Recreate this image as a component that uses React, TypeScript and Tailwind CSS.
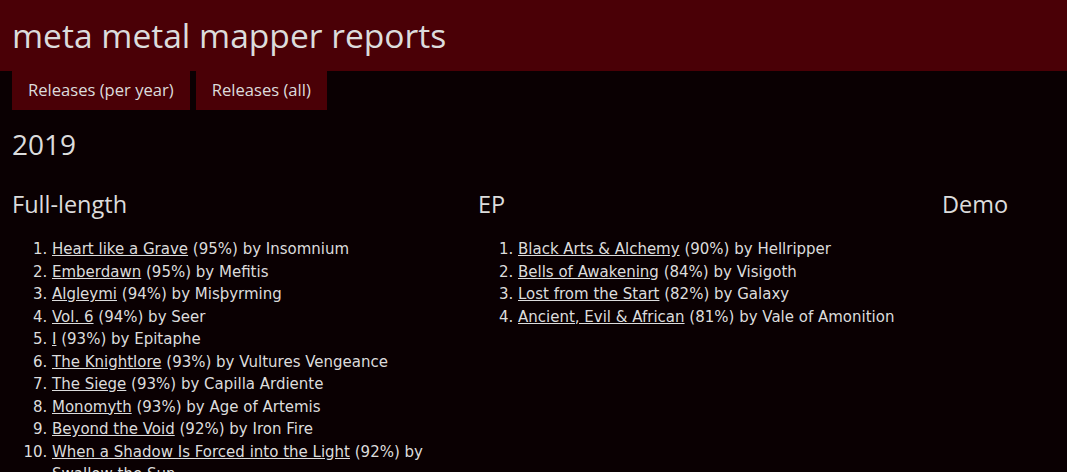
import React from 'react';

interface Release {
  title: string;
  score: number;
  artist: string;
}

const fullLength: Release[] = [
  { title: 'Heart like a Grave', score: 95, artist: 'Insomnium' },
  { title: 'Emberdawn', score: 95, artist: 'Mefitis' },
  { title: 'Algleymi', score: 94, artist: 'Misþyrming' },
  { title: 'Vol. 6', score: 94, artist: 'Seer' },
  { title: 'I', score: 93, artist: 'Epitaphe' },
  { title: 'The Knightlore', score: 93, artist: 'Vultures Vengeance' },
  { title: 'The Siege', score: 93, artist: 'Capilla Ardiente' },
  { title: 'Monomyth', score: 93, artist: 'Age of Artemis' },
  { title: 'Beyond the Void', score: 92, artist: 'Iron Fire' },
  { title: 'When a Shadow Is Forced into the Light', score: 92, artist: 'Swallow the Sun' },
];

const eps: Release[] = [
  { title: 'Black Arts & Alchemy', score: 90, artist: 'Hellripper' },
  { title: 'Bells of Awakening', score: 84, artist: 'Visigoth' },
  { title: 'Lost from the Start', score: 82, artist: 'Galaxy' },
  { title: 'Ancient, Evil & African', score: 81, artist: 'Vale of Amonition' },
];

const ReleaseList = ({ items }: { items: Release[] }) => (
  <ol className="list-decimal pl-10 text-[15px] leading-[22.5px] font-['DejaVu_Sans',sans-serif]">
    {items.map((r, i) => (
      <li key={i}>
        <a href="#" className="underline">{r.title}</a> ({r.score}%) by {r.artist}
      </li>
    ))}
  </ol>
);

const App = () => {
  return (
    <div className="min-h-[472px] bg-[#0a0002] text-[#dcdcdc] font-['Open_Sans',sans-serif] overflow-hidden">
      <header className="bg-[#4a0006] h-[71px] px-3 flex items-center">
        <h1 className="text-[33.6px] leading-none">meta metal mapper reports</h1>
      </header>
      <nav className="flex gap-[6px] px-3">
        <a href="#" className="bg-[#4a0006] h-[39px] px-4 flex items-center text-[16.6px]">Releases (per year)</a>
        <a href="#" className="bg-[#4a0006] h-[39px] px-4 flex items-center text-[16.6px]">Releases (all)</a>
      </nav>
      <main className="px-3">
        <h2 className="text-[28px] mt-4 leading-[36px]">2019</h2>
        <div className="grid grid-cols-[466px_464px_auto] mt-7">
          <section className="pr-3">
            <h3 className="text-[23.5px] leading-[28px] mb-5">Full-length</h3>
            <ReleaseList items={fullLength} />
          </section>
          <section className="pr-3">
            <h3 className="text-[23.5px] leading-[28px] mb-5">EP</h3>
            <ReleaseList items={eps} />
          </section>
          <section>
            <h3 className="text-[23.5px] leading-[28px] mb-5">Demo</h3>
          </section>
        </div>
      </main>
    </div>
  );
};

export default App;
